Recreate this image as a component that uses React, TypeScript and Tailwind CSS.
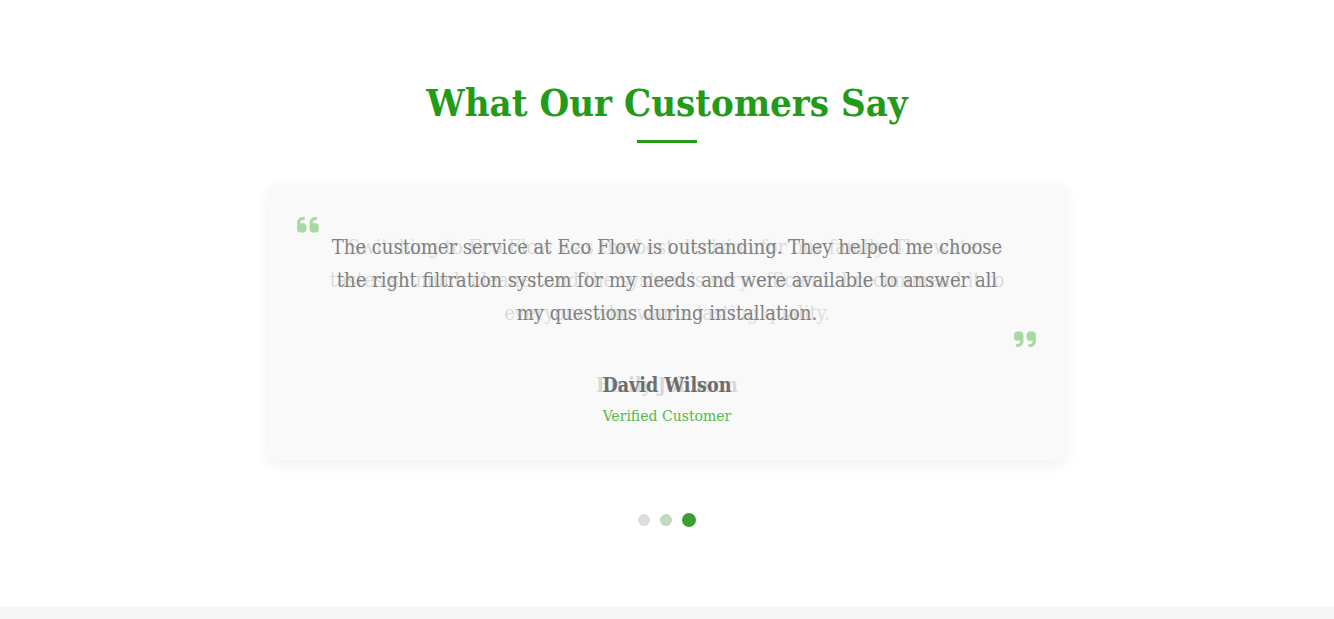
import React from "react";

const QuoteLeft = ({ className }: { className?: string }) => (
  <svg viewBox="0 0 448 330" className={className} fill="currentColor">
    <path d="M0 216C0 149.7 53.7 96 120 96h8c17.7 0 32 14.3 32 32s-14.3 32-32 32h-8c-30.9 0-56 25.1-56 56v8h64c35.3 0 64 28.7 64 64v64c0 35.3-28.7 64-64 64H64c-35.3 0-64-28.7-64-64V216zm256 0c0-66.3 53.7-120 120-120h8c17.7 0 32 14.3 32 32s-14.3 32-32 32h-8c-30.9 0-56 25.1-56 56v8h64c35.3 0 64 28.7 64 64v64c0 35.3-28.7 64-64 64H320c-35.3 0-64-28.7-64-64V216z" transform="translate(0,-96)" />
  </svg>
);

const QuoteRight = ({ className }: { className?: string }) => (
  <svg viewBox="0 0 448 330" className={className} fill="currentColor">
    <g transform="rotate(180 224 165)">
      <path d="M0 216C0 149.7 53.7 96 120 96h8c17.7 0 32 14.3 32 32s-14.3 32-32 32h-8c-30.9 0-56 25.1-56 56v8h64c35.3 0 64 28.7 64 64v64c0 35.3-28.7 64-64 64H64c-35.3 0-64-28.7-64-64V216zm256 0c0-66.3 53.7-120 120-120h8c17.7 0 32 14.3 32 32s-14.3 32-32 32h-8c-30.9 0-56 25.1-56 56v8h64c35.3 0 64 28.7 64 64v64c0 35.3-28.7 64-64 64H320c-35.3 0-64-28.7-64-64V216z" transform="translate(0,-96)" />
    </g>
  </svg>
);

export default function App() {
  return (
    <div className="min-h-screen bg-white">
      <section className="pt-[80px] pb-[79px] font-['DejaVu_Serif_Condensed','DejaVu_Serif',serif] [font-stretch:semi-condensed]">
        <h2 className="text-center text-[38px] leading-[46px] font-bold text-[#239a18]">
          What Our Customers Say
        </h2>
        <div className="mx-auto mt-[14px] h-[3px] w-[60px] bg-[#239a18]" />

        <div className="mx-auto mt-[40px] w-[798px]">
          <div className="relative rounded-[8px] bg-[#f9f9f9] px-[60px] pt-[48px] pb-[33px] shadow-[0_5px_15px_rgba(0,0,0,0.06)]">
            <QuoteLeft className="absolute left-[29px] top-[34px] h-[16px] w-[22px] text-[#a8d8a3]" />
            <QuoteRight className="absolute right-[30px] top-[148px] h-[16px] w-[22px] text-[#a8d8a3]" />

            <div className="grid text-center">
              <div className="[grid-area:1/1] opacity-[0.22]">
                <p className="text-[20px] leading-[33px] text-[#777]">
                  Switching to Eco Flow was the best decision for our family. The water tastes so
                  much cleaner and the system is very efficient. I recommend it to everyone who
                  wants lasting quality.
                </p>
                <div className="mt-[42px] text-[19.5px] leading-[28px] font-bold text-[#666]">
                  Emily Johnson
                </div>
              </div>
              <div className="[grid-area:1/1]">
                <p className="text-[20px] leading-[33px] text-[#828282]">
                  The customer service at Eco Flow is outstanding. They helped me choose the right
                  filtration system for my needs and were available to answer all my questions
                  during installation.
                </p>
                <div className="mt-[42px] text-[19.5px] leading-[28px] font-bold text-[#6e6e6e]">
                  David Wilson
                </div>
                <div className="mt-[5px] text-[15.6px] leading-[22px] text-[#55b84a]">
                  Verified Customer
                </div>
              </div>
            </div>
          </div>
        </div>

        <div className="mt-[53px] flex items-center justify-center gap-[10px]">
          <span className="h-[12px] w-[12px] rounded-full bg-[#dcdcdc]" />
          <span className="h-[12px] w-[12px] rounded-full bg-[#c3d9c2]" />
          <span className="h-[14px] w-[14px] rounded-full bg-[#3c9f33]" />
        </div>
      </section>
      <div className="h-[60px] bg-[#f7f7f7]" />
    </div>
  );
}
